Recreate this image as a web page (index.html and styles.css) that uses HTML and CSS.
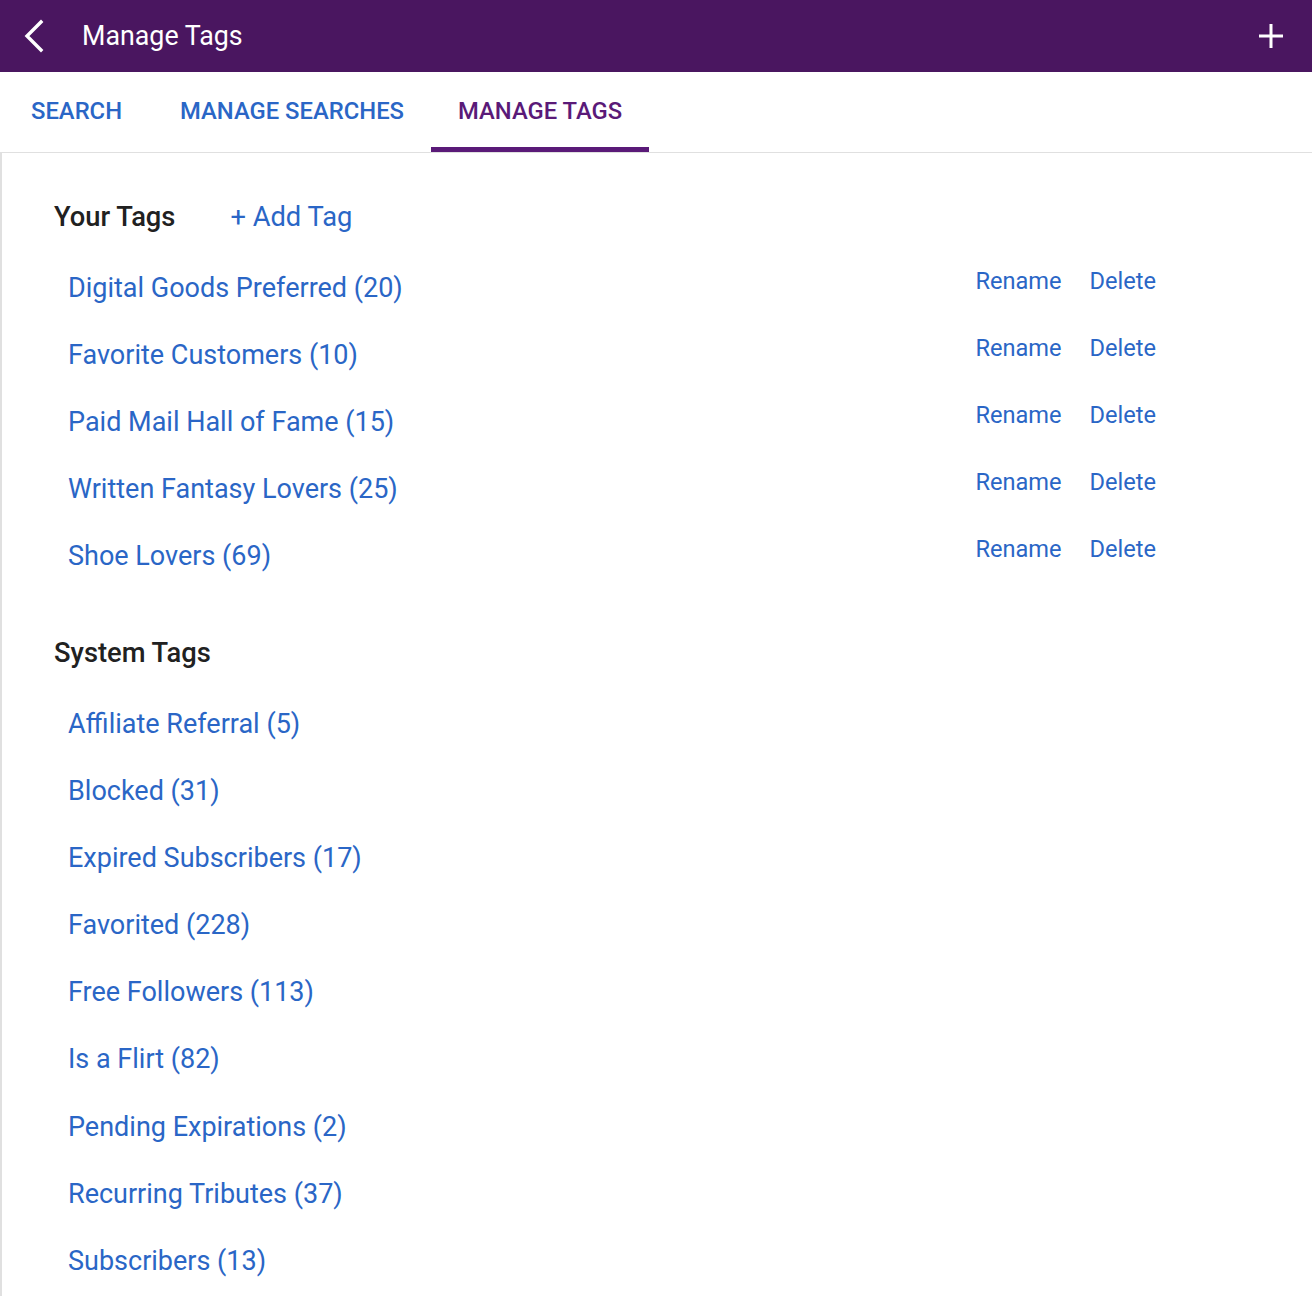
FILE: index.html
```html
<!DOCTYPE html>
<html lang="en">
<head>
	<meta charset="UTF-8">
	<title>Manage Tags</title>
	<link rel="stylesheet" href="styles.css">
</head>
<body>
	<div class="topbar">
		<a class="back" href="#">
			<svg width="24" height="34" viewBox="0 0 24 34"><path d="M19 3 L5 17 L19 31" fill="none" stroke="#fff" stroke-width="3.4" stroke-linecap="square"/></svg>
		</a>
		<div class="title">Manage Tags</div>
		<a class="add" href="#">
			<svg width="26" height="26" viewBox="0 0 26 26"><path d="M13 1 V25 M1 13 H25" fill="none" stroke="#fff" stroke-width="3"/></svg>
		</a>
	</div>
	<div class="tabs">
		<a class="tab first" href="#">SEARCH</a>
		<a class="tab" href="#">MANAGE SEARCHES</a>
		<a class="tab active" href="#">MANAGE TAGS</a>
	</div>
	<div class="content">
		<div class="head">
			<h2>Your Tags</h2>
			<a class="addtag" href="#">+ Add Tag</a>
		</div>
		<ul class="tags">
			<li><a href="#">Digital Goods Preferred (20)</a><span class="acts"><a href="#">Rename</a><a href="#">Delete</a></span></li>
			<li><a href="#">Favorite Customers (10)</a><span class="acts"><a href="#">Rename</a><a href="#">Delete</a></span></li>
			<li><a href="#">Paid Mail Hall of Fame (15)</a><span class="acts"><a href="#">Rename</a><a href="#">Delete</a></span></li>
			<li><a href="#">Written Fantasy Lovers (25)</a><span class="acts"><a href="#">Rename</a><a href="#">Delete</a></span></li>
			<li><a href="#">Shoe Lovers (69)</a><span class="acts"><a href="#">Rename</a><a href="#">Delete</a></span></li>
		</ul>
		<div class="head sys">
			<h2>System Tags</h2>
		</div>
		<ul class="tags">
			<li><a href="#">Affiliate Referral (5)</a></li>
			<li><a href="#">Blocked (31)</a></li>
			<li><a href="#">Expired Subscribers (17)</a></li>
			<li><a href="#">Favorited (228)</a></li>
			<li><a href="#">Free Followers (113)</a></li>
			<li><a href="#">Is a Flirt (82)</a></li>
			<li><a href="#">Pending Expirations (2)</a></li>
			<li><a href="#">Recurring Tributes (37)</a></li>
			<li><a href="#">Subscribers (13)</a></li>
		</ul>
	</div>
</body>
</html>
```

FILE: styles.css
```css
*{
	margin: 0;
	padding: 0;
	box-sizing: border-box;
}
body{
	font-family: Roboto, "Liberation Sans", sans-serif;
	background: #fff;
}
a{
	text-decoration: none;
	color: #2a66c6;
}
.topbar{
	height: 72px;
	background: #4a1660;
	display: flex;
	align-items: center;
	padding: 0 28px 0 22px;
}
.back{
	display: flex;
	width: 60px;
}
.title{
	color: #fff;
	font-size: 26.8px;
	flex: 1;
}
.add{
	display: flex;
}
.tabs{
	height: 81px;
	display: flex;
	border-bottom: 1px solid #e0e0e0;
	padding-left: 4px;
}
.tab{
	font-size: 23.8px;
	font-weight: 500;
	padding: 2px 27px 0;
	display: flex;
	align-items: center;
	border-bottom: 5px solid transparent;
}
.tab.first{
	margin-right: 4px;
}
.tab.active{
	color: #5a1a78;
	border-bottom-color: #5a1a78;
}
.content{
	border-left: 2px solid #e0e0e0;
	padding: 44px 0 0 52px;
	min-height: 1143px;
}
.head{
	display: flex;
	align-items: center;
	gap: 55px;
	height: 40px;
}
.head h2{
	font-size: 27.3px;
	font-weight: 500;
	color: #212121;
}
.addtag{
	font-size: 27.3px;
}
.sys{
	margin-top: 30px;
}
.tags{
	list-style: none;
	padding: 17px 0 14px 14px;
}
.tags li{
	height: 67.1px;
	display: flex;
	align-items: center;
	width: 1088px;
}
.tags li > a{
	font-size: 27px;
	flex: 1;
}
.acts{
	display: flex;
	gap: 28px;
	margin-top: -13px;
}
.acts a{
	font-size: 23.6px;
}
```
